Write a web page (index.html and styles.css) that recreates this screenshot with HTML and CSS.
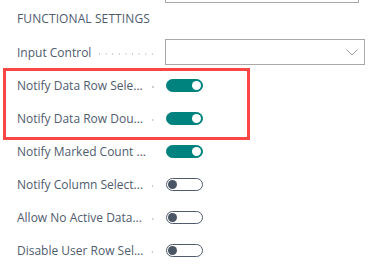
FILE: index.html
```html
<!DOCTYPE html>
<html>
<head>
<meta charset="utf-8">
<link rel="stylesheet" href="styles.css">
</head>
<body>
<div class="page">
  <div class="prev-field"><div class="prev-box"></div></div>
  <div class="group-title">FUNCTIONAL SETTINGS</div>
  <div class="row">
    <div class="label"><span class="text">Input Control</span><span class="leader"></span></div>
    <div class="select"><svg class="chev" width="12" height="7" viewBox="0 0 12 7"><path d="M0.5 0.5 L6 6 L11.5 0.5" fill="none" stroke="#9a9a9a" stroke-width="1"/></svg></div>
  </div>
  <div class="highlighted">
    <div class="row">
      <div class="label"><span class="text">Notify Data Row Sele...</span><span class="leader"></span></div>
      <div class="toggle on"><span class="knob"></span></div>
    </div>
    <div class="row">
      <div class="label"><span class="text">Notify Data Row Dou...</span><span class="leader"></span></div>
      <div class="toggle on"><span class="knob"></span></div>
    </div>
    <div class="annot"></div>
  </div>
  <div class="row">
    <div class="label"><span class="text">Notify Marked Count ...</span><span class="leader"></span></div>
    <div class="toggle on"><span class="knob"></span></div>
  </div>
  <div class="row">
    <div class="label"><span class="text">Notify Column Select...</span><span class="leader"></span></div>
    <div class="toggle"><span class="knob"></span></div>
  </div>
  <div class="row">
    <div class="label"><span class="text">Allow No Active Data...</span><span class="leader"></span></div>
    <div class="toggle"><span class="knob"></span></div>
  </div>
  <div class="row">
    <div class="label"><span class="text">Disable User Row Sel...</span><span class="leader"></span></div>
    <div class="toggle"><span class="knob"></span></div>
  </div>
</div>
</body>
</html>
```
FILE: styles.css
```css
html, body {
  margin: 0;
  padding: 0;
  background: #ffffff;
}
.page {
  width: 370px;
  height: 275px;
  overflow: hidden;
  font-family: "Open Sans", "Noto Sans", sans-serif;
  font-size: 12px;
  color: #505c6d;
}
.prev-field {
  height: 3px;
  padding-left: 165px;
}
.prev-box {
  width: 192px;
  height: 2px;
  border: 1px solid #a8a8a8;
  border-top: none;
}
.group-title {
  height: 30px;
  padding-bottom: 3px;
  display: flex;
  align-items: center;
  padding-left: 17px;
  font-size: 12px;
  letter-spacing: 0.1px;
  color: #505c6d;
}
.row {
  height: 33px;
  display: flex;
  align-items: center;
  padding-left: 17px;
}
.label {
  width: 149px;
  display: flex;
  align-items: center;
  white-space: nowrap;
}
.text {
  flex: none;
}
.leader {
  flex: 1;
  min-width: 2px;
  height: 2px;
  margin: 3px 10px 0 8px;
  background-image: radial-gradient(circle, #c8ccd2 0.7px, transparent 1px);
  background-size: 6.6px 2px;
  background-position: right center;
  background-repeat: repeat-x;
}
.select {
  width: 192px;
  height: 24px;
  border: 1px solid #a8a8a8;
  display: flex;
  align-items: center;
  justify-content: flex-end;
  padding-right: 6px;
  box-sizing: content-box;
  margin-top: -1px;
  margin-left: -1px;
}
.chev {
  display: block;
}
.highlighted {
  position: relative;
}
.annot {
  position: absolute;
  left: 3px;
  top: -1px;
  width: 241px;
  height: 66px;
  border: 3px solid #fb4646;
  pointer-events: none;
}
.toggle {
  width: 33px;
  height: 11px;
  border: 1px solid #505c6d;
  border-radius: 7px;
  display: flex;
  align-items: center;
  padding: 0 1px;
}
.toggle .knob {
  width: 9px;
  height: 9px;
  border-radius: 50%;
  background: #4a5566;
}
.toggle.on {
  background: #00827f;
  border-color: #00827f;
  justify-content: flex-end;
}
.toggle.on .knob {
  background: #ffffff;
}
```
